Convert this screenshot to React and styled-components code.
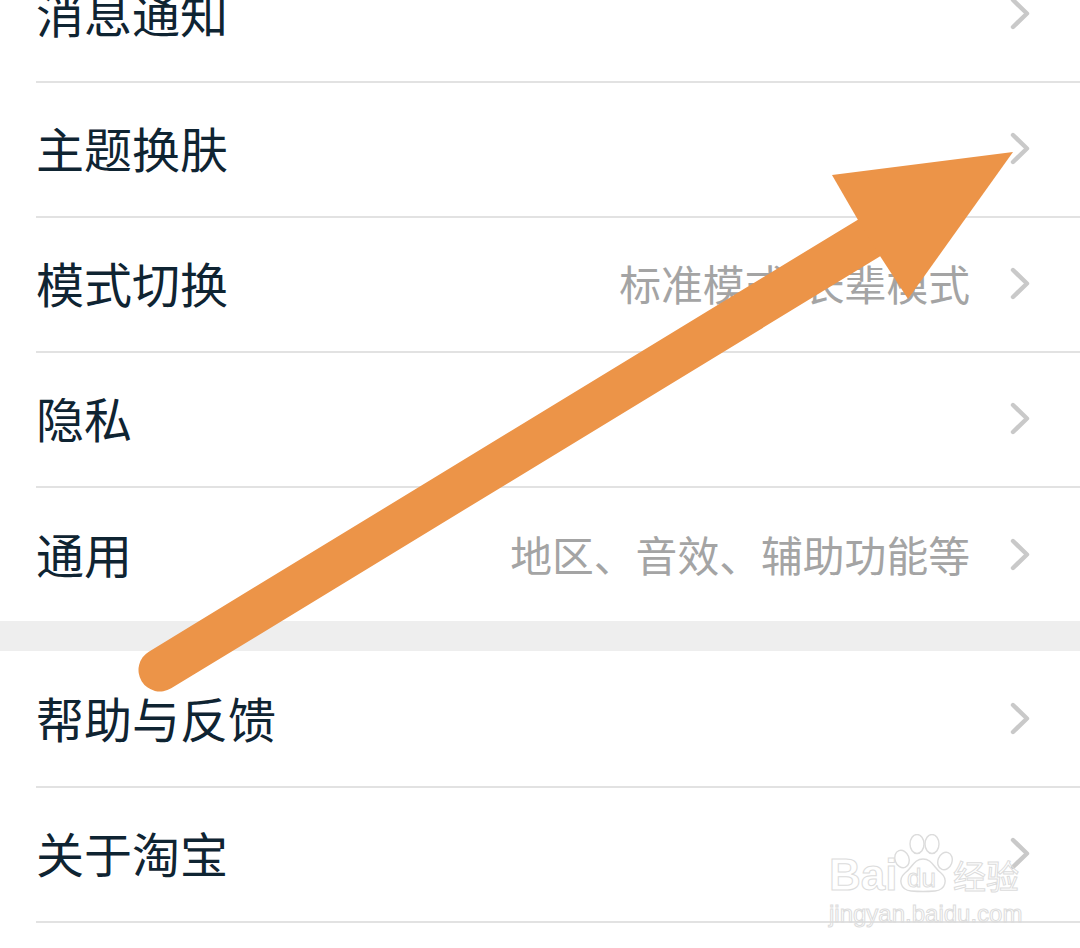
import React from 'react'
import styled, { createGlobalStyle } from 'styled-components'

const Global = createGlobalStyle`
  html, body { margin: 0; padding: 0; background: #fff; }
  body { font-family: "Noto Sans CJK SC", "Noto Sans", sans-serif; }
`

const Screen = styled.div`
  position: relative;
  width: 1080px;
  height: 948px;
  overflow: hidden;
  background: #fff;
`
const List = styled.div`
  margin-top: -52px;
`
const Row = styled.div`
  box-sizing: border-box;
  height: 135px;
  margin-left: 36px;
  padding-right: 50px;
  display: flex;
  align-items: center;
  justify-content: space-between;
  border-bottom: ${({ $flat }) => ($flat ? 'none' : '2px solid #e2e2e2')};
`
const Label = styled.span`
  font-size: 48px;
  line-height: 1;
  color: #0f2432;
  margin-bottom: 6px;
`
const Right = styled.div`
  display: flex;
  align-items: center;
  gap: 40px;
`
const Hint = styled.span`
  font-size: 41.8px;
  line-height: 1;
  color: #a4a4a4;
  white-space: nowrap;
  margin-bottom: 2px;
`
const ChevronIcon = styled.svg`
  display: block;
  margin-bottom: 2px;
`
const Band = styled.div`
  height: 30px;
  margin-top: -2px;
  margin-bottom: 2px;
  background: #eeeeee;
`
const ArrowLayer = styled.svg`
  position: absolute;
  left: 0;
  top: 0;
`
const Mark = styled.div`
  position: absolute;
  left: 829px;
  top: 832px;
  width: 195px;
  display: flex;
  flex-direction: column;
  color: transparent;
  -webkit-text-stroke: 1px #dcdcdc;
  font-family: "Liberation Sans", sans-serif;
`
const MarkTop = styled.div`
  display: flex;
  align-items: flex-end;
  height: 64px;
`
const MarkBai = styled.span`
  font-size: 44px;
  line-height: 44px;
  font-weight: 700;
  margin-bottom: -1px;
  width: 64px;
`
const Paw = styled.div`
  position: relative;
  width: 60px;
  height: 62px;
  flex: none;
`
const MarkDu = styled.span`
  position: absolute;
  left: 14px;
  top: 31px;
  font-size: 26px;
  line-height: 26px;
`
const MarkJing = styled.span`
  font-size: 33px;
  line-height: 36px;
  font-family: "Noto Sans CJK SC", sans-serif;
  margin-bottom: 3px;
`
const MarkUrl = styled.span`
  margin-top: 5px;
  font-size: 24px;
  line-height: 26px;
  white-space: nowrap;
`

const Chevron = () => (
  <ChevronIcon width="20" height="33" viewBox="0 0 20 33" fill="none">
    <path d="M3 3 L17 16.5 L3 30" stroke="#c9c9c9" strokeWidth="4.4" strokeLinecap="round" strokeLinejoin="round" />
  </ChevronIcon>
)

const Item = ({ label, hint, flat }) => (
  <Row $flat={flat}>
    <Label>{label}</Label>
    <Right>
      {hint && <Hint>{hint}</Hint>}
      <Chevron />
    </Right>
  </Row>
)

const App = () => (
  <Screen>
    <Global />
    <List>
      <Item label="消息通知" />
      <Item label="主题换肤" />
      <Item label="模式切换" hint="标准模式/长辈模式" />
      <Item label="隐私" />
      <Item label="通用" hint="地区、音效、辅助功能等" flat />
      <Band />
      <Item label="帮助与反馈" />
      <Item label="关于淘宝" />
    </List>

    <ArrowLayer width="1080" height="948" viewBox="0 0 1080 948">
      <path d="M160 670 L869 238" stroke="#ec9448" strokeWidth="43" strokeLinecap="round" fill="none" />
      <polygon points="1013,152 832,175 858,220 880,256 908,299" fill="#ec9448" />
    </ArrowLayer>

    <Mark>
      <MarkTop>
        <MarkBai>Bai</MarkBai>
        <Paw>
          <svg width="60" height="62" viewBox="0 0 60 62" fill="#fff" stroke="#dcdcdc" strokeWidth="1.4">
            <ellipse cx="9" cy="25" rx="7" ry="9" transform="rotate(-20 9 25)" />
            <ellipse cx="24" cy="10" rx="7" ry="9.5" />
            <ellipse cx="39" cy="10" rx="7" ry="9.5" />
            <ellipse cx="52" cy="27" rx="7" ry="9" transform="rotate(20 52 27)" />
            <path d="M30 25 C21 25 19 34 12 39 C5 45 7 56 18 57 C24 57.500 36 57.500 42 57 C53 56 55 45 48 39 C41 34 39 25 30 25 Z" />
          </svg>
          <MarkDu>du</MarkDu>
        </Paw>
        <MarkJing>经验</MarkJing>
      </MarkTop>
      <MarkUrl>jingyan.baidu.com</MarkUrl>
    </Mark>
  </Screen>
)

export default App
